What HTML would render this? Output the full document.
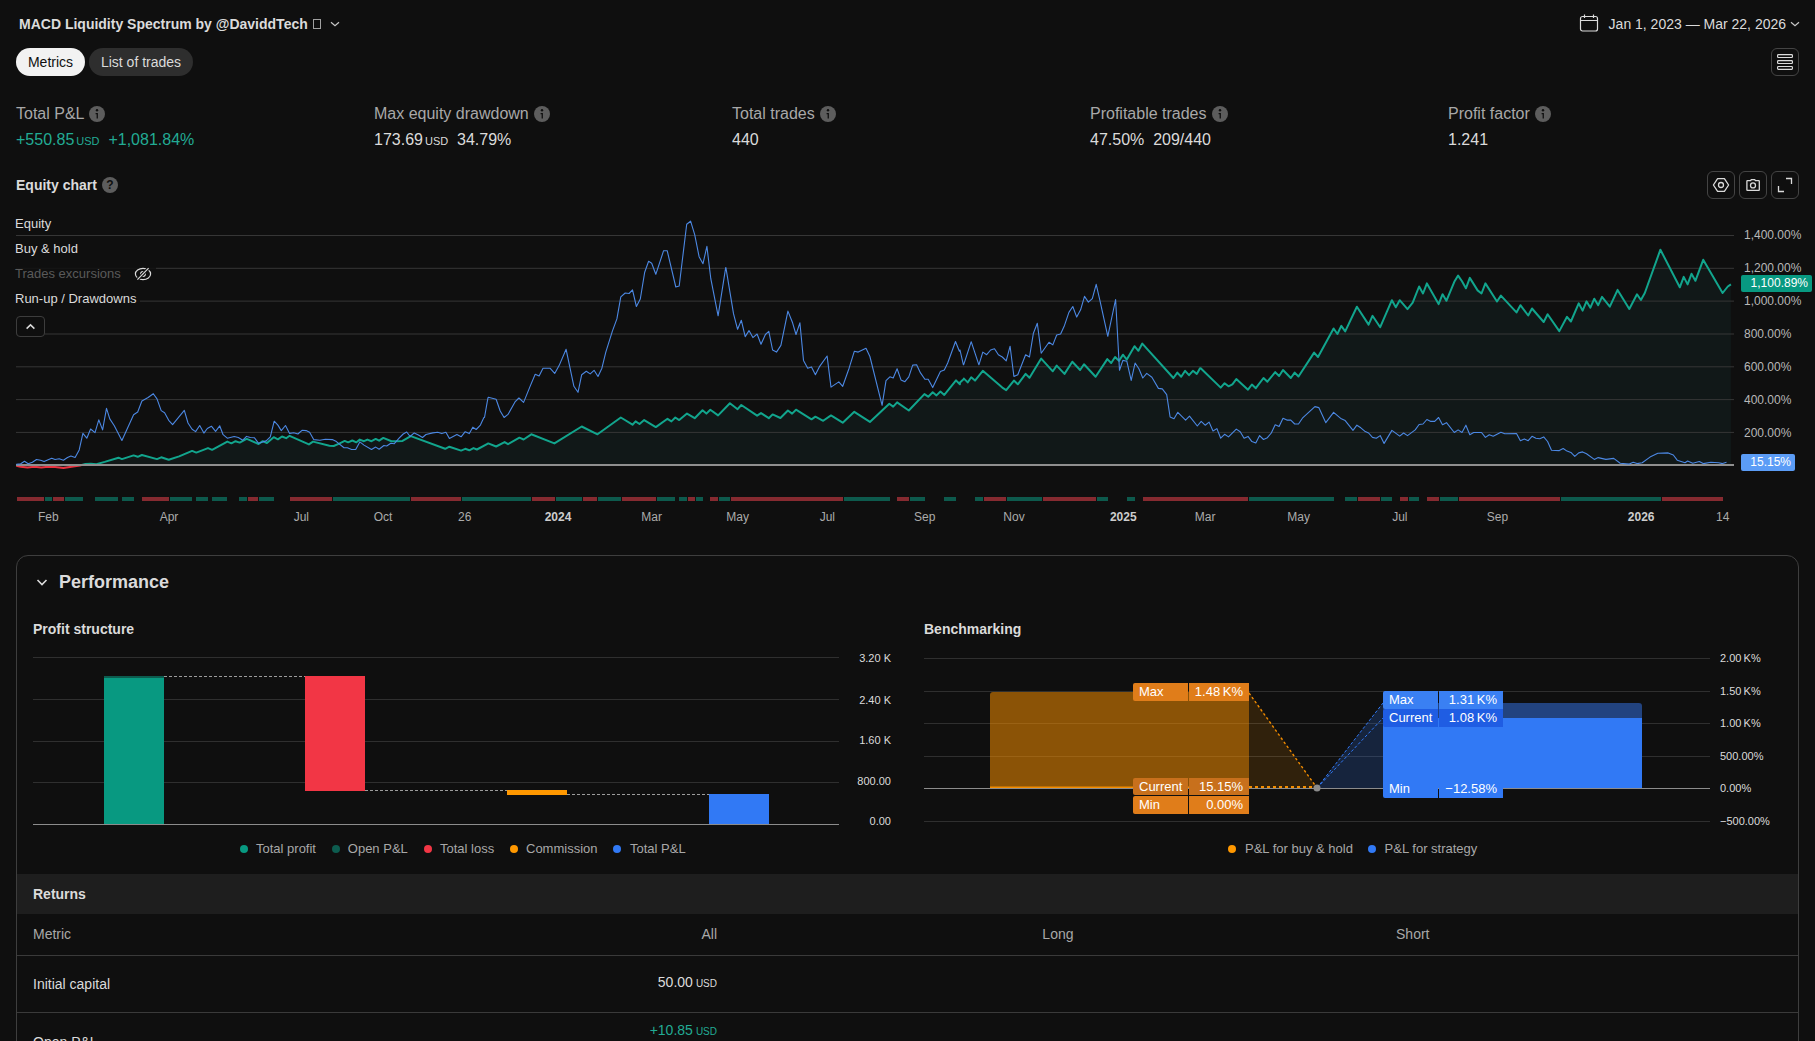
<!DOCTYPE html>
<html><head><meta charset="utf-8">
<style>
*{box-sizing:border-box;margin:0;padding:0}
html,body{width:1815px;height:1041px;overflow:hidden;background:#0f0f0f;font-family:"Liberation Sans",sans-serif;color:#dbdbdb}
.a{position:absolute;white-space:nowrap}
.title{left:19px;top:16px;font-size:14px;font-weight:bold;color:#dbdbdb;line-height:17px}
.pill{top:48px;height:28px;border-radius:14px;font-size:14px;line-height:28px;text-align:center}
.mlabel{top:104px;font-size:16px;color:#a8a8a8;line-height:19px}
.mval{top:130px;font-size:16px;color:#dbdbdb;line-height:19px}
.usd{font-size:11px;margin-left:2px}
.info{display:inline-block;width:16px;height:16px;border-radius:50%;background:#5d5d5d;vertical-align:-3px;margin-left:5px;position:relative}
.btn{width:28px;height:28px;border:1px solid #444;border-radius:6px}
.yl{font-size:12px;color:#b8b8b8;line-height:14px}
.xl{font-size:12px;color:#ababab;line-height:14px;top:510px}
.leg{font-size:13px;color:#dbdbdb;line-height:16px;left:15px;margin-top:1px;background:rgba(15,15,15,0.85);padding-right:4px}
.perf{left:16px;top:555px;width:1783px;height:520px;border:1px solid #3e3e3e;border-radius:12px}
.gl{height:1px;background:#2e2e2e}
.ax{font-size:11px;color:#dbdbdb;line-height:13px}
.lg{font-size:13px;color:#a8a8a8;line-height:16px;top:841px}
.dot{display:inline-block;width:8px;height:8px;border-radius:50%;margin-right:7px;vertical-align:0px}
.tag{height:18px;font-size:13px;line-height:18px;color:#fff}
</style></head><body>
<!-- header -->
<div class="a title">MACD Liquidity Spectrum by @DaviddTech</div>
<div class="a" style="left:313px;top:19px;width:8px;height:10px;border:1px solid #a0a0a0"></div>
<svg class="a" style="left:329px;top:19px" width="12" height="9" viewBox="0 0 12 9"><path d="M2 3.2L6 6.8L10 3.2" fill="none" stroke="#c8c8c8" stroke-width="1.2"/></svg>

<svg class="a" style="left:1579px;top:13px" width="20" height="20" viewBox="0 0 20 20"><rect x="1.5" y="3.5" width="17" height="14.5" rx="2" fill="none" stroke="#dbdbdb" stroke-width="1.2"/><path d="M1.5 7.5H18.5M5.5 1.5V5M14.5 1.5V5" stroke="#dbdbdb" stroke-width="1.2"/></svg>
<div class="a" style="left:1608.6px;top:16px;font-size:14px;line-height:17px;color:#dbdbdb">Jan 1, 2023 — Mar 22, 2026</div>
<svg class="a" style="left:1789px;top:19px" width="12" height="9" viewBox="0 0 12 9"><path d="M2 3.2L6 6.8L10 3.2" fill="none" stroke="#c8c8c8" stroke-width="1.2"/></svg>

<div class="a pill" style="left:16px;width:69px;background:#f2f2f2;color:#0f0f0f">Metrics</div>
<div class="a pill" style="left:89px;width:104px;background:#2e2e2e;color:#dbdbdb">List of trades</div>
<div class="a btn" style="left:1771px;top:48px"><svg style="position:absolute;left:5px;top:5px" width="17" height="17" viewBox="0 0 17 17"><rect x="0.6" y="0.6" width="14.8" height="2.9" rx="0.8" fill="none" stroke="#dbdbdb" stroke-width="1.2"/><rect x="0.6" y="6.6" width="14.8" height="2.9" rx="0.8" fill="none" stroke="#dbdbdb" stroke-width="1.2"/><rect x="0.6" y="12.5" width="14.8" height="2.9" rx="0.8" fill="none" stroke="#dbdbdb" stroke-width="1.2"/></svg></div>

<!-- metrics -->
<div class="a mlabel" style="left:16px">Total P&amp;L<span class="info"><svg style="position:absolute;left:0;top:0" width="16" height="16" viewBox="0 0 16 16"><circle cx="8" cy="4.3" r="1.2" fill="#0f0f0f"/><path d="M6.6 7H8.9V12.5H7.6V8.2H6.6Z" fill="#0f0f0f"/></svg></span></div>
<div class="a mval" style="left:16px"><span style="color:#22ab94">+550.85<span class="usd">USD</span>&nbsp;&nbsp;+1,081.84%</span></div>
<div class="a mlabel" style="left:374px">Max equity drawdown<span class="info"><svg style="position:absolute;left:0;top:0" width="16" height="16" viewBox="0 0 16 16"><circle cx="8" cy="4.3" r="1.2" fill="#0f0f0f"/><path d="M6.6 7H8.9V12.5H7.6V8.2H6.6Z" fill="#0f0f0f"/></svg></span></div>
<div class="a mval" style="left:374px">173.69<span class="usd">USD</span>&nbsp;&nbsp;34.79%</div>
<div class="a mlabel" style="left:732px">Total trades<span class="info"><svg style="position:absolute;left:0;top:0" width="16" height="16" viewBox="0 0 16 16"><circle cx="8" cy="4.3" r="1.2" fill="#0f0f0f"/><path d="M6.6 7H8.9V12.5H7.6V8.2H6.6Z" fill="#0f0f0f"/></svg></span></div>
<div class="a mval" style="left:732px">440</div>
<div class="a mlabel" style="left:1090px">Profitable trades<span class="info"><svg style="position:absolute;left:0;top:0" width="16" height="16" viewBox="0 0 16 16"><circle cx="8" cy="4.3" r="1.2" fill="#0f0f0f"/><path d="M6.6 7H8.9V12.5H7.6V8.2H6.6Z" fill="#0f0f0f"/></svg></span></div>
<div class="a mval" style="left:1090px">47.50%&nbsp;&nbsp;209/440</div>
<div class="a mlabel" style="left:1448px">Profit factor<span class="info"><svg style="position:absolute;left:0;top:0" width="16" height="16" viewBox="0 0 16 16"><circle cx="8" cy="4.3" r="1.2" fill="#0f0f0f"/><path d="M6.6 7H8.9V12.5H7.6V8.2H6.6Z" fill="#0f0f0f"/></svg></span></div>
<div class="a mval" style="left:1448px">1.241</div>


<!-- equity chart header -->
<div class="a" style="left:16px;top:177px;font-size:14px;font-weight:bold;line-height:17px;color:#dbdbdb">Equity chart</div>
<div class="a" style="left:102px;top:177px;width:16px;height:16px;border-radius:50%;background:#5d5d5d;color:#0f0f0f;font-size:12px;font-weight:bold;line-height:17px;text-align:center">?</div>
<div class="a btn" style="left:1707px;top:171px"><svg style="position:absolute;left:-1px;top:-1px" width="28" height="28" viewBox="0 0 28 28"><path d="M6.4 14L10.6 7.6H17.4L21.6 14L17.4 20.4H10.6Z" fill="none" stroke="#dbdbdb" stroke-width="1.3" stroke-linejoin="round"/><circle cx="14" cy="14" r="2.5" fill="none" stroke="#dbdbdb" stroke-width="1.3"/></svg></div>
<div class="a btn" style="left:1739px;top:171px"><svg style="position:absolute;left:-1px;top:-1px" width="28" height="28" viewBox="0 0 28 28"><path d="M7.9 10.2Q7.9 9.7 8.4 9.7H11.6L12.3 8.6H15.7L16.4 9.7H19.8Q20.3 9.7 20.3 10.2V18.9Q20.3 19.4 19.8 19.4H8.4Q7.9 19.4 7.9 18.9Z" fill="none" stroke="#dbdbdb" stroke-width="1.3" stroke-linejoin="round"/><circle cx="14" cy="14.4" r="2.5" fill="none" stroke="#dbdbdb" stroke-width="1.3"/></svg></div>
<div class="a btn" style="left:1771px;top:171px"><svg style="position:absolute;left:-1px;top:-1px" width="28" height="28" viewBox="0 0 28 28"><path d="M15 7.5H20.5V13M7.5 15V20.5H13" fill="none" stroke="#dbdbdb" stroke-width="1.3"/></svg></div>

<!-- chart -->
<svg class="a" style="left:0;top:200px" width="1815" height="340" viewBox="0 200 1815 340">
<defs>
<clipPath id="above"><rect x="0" y="200" width="1815" height="265"/></clipPath>
<clipPath id="below"><rect x="0" y="465" width="1815" height="40"/></clipPath>
</defs>
<polygon points="16,465 16.3,465.7 20.7,466.8 27.5,467.4 34.4,466.8 41.3,467.5 48.2,466.8 55.1,467.1 63.4,467.9 71.6,466.8 79.9,465.5 85.4,463.9 90.9,463.7 96.4,464.2 104.7,461.9 118.5,457.7 121.9,459.1 133.6,455.4 137.7,456.8 141.9,455.0 157.0,459.1 161.2,457.3 168.7,459.8 179.1,456.4 192.1,450.9 196.3,452.6 208.0,448.1 212.1,449.8 227.3,441.6 231.4,443.3 235.5,441.2 239.7,442.6 246.6,438.9 246.9,438.9 258.6,444.0 262.7,441.2 266.9,443.0 273.7,437.2 277.9,439.3 282.0,436.5 286.1,438.2 289.6,435.8 308.9,444.4 313.0,441.6 329.5,445.8 333.7,446.0 339.2,443.7 344.7,440.9 348.1,442.3 352.3,440.5 356.4,442.3 359.8,439.6 364.0,441.2 367.4,439.6 371.5,441.2 375.7,438.9 379.1,440.7 383.3,437.9 391.5,441.2 395.6,441.2 402.5,440.9 410.8,436.1 445.2,448.8 449.4,446.7 461.1,450.6 465.2,448.8 469.3,450.3 473.5,448.1 476.9,449.5 487.9,443.7 488.3,443.4 496.1,446.5 504.6,442.1 508.0,444.2 519.4,437.7 523.6,439.5 531.3,434.3 554.4,443.4 581.7,426.5 597.5,434.3 620.8,417.5 632.5,424.7 635.6,421.4 639.5,424.0 644.2,420.1 655.8,427.1 667.5,418.8 671.4,421.4 675.3,417.5 679.2,420.1 687.0,413.6 694.7,418.2 702.5,410.2 706.4,413.6 710.3,409.7 718.1,415.4 729.9,403.2 737.6,409.2 741.3,405.0 757.1,415.7 761.0,413.1 768.8,418.2 772.6,414.4 780.4,418.0 787.9,410.5 792.1,413.6 796.0,409.7 811.5,419.3 815.4,416.7 823.2,420.8 831.0,415.4 842.7,422.7 854.3,411.8 869.9,421.9 889.3,403.7 893.2,406.6 897.1,402.4 908.8,410.5 924.4,394.1 928.2,396.7 932.7,392.3 936.5,395.4 940.4,391.5 944.3,394.9 956.0,380.4 959.9,384.3 960.0,382.5 963.8,379.1 963.9,378.6 967.3,381.9 967.7,382.5 971.2,377.3 975.0,380.6 982.8,370.8 1002.3,387.6 1006.2,390.2 1013.9,380.6 1017.8,384.3 1025.6,373.9 1029.5,377.8 1041.2,358.6 1052.8,371.3 1056.7,365.6 1064.5,373.9 1072.3,361.7 1080.1,370.0 1084.0,364.3 1095.6,376.8 1107.3,359.1 1111.2,363.0 1115.1,357.0 1119.0,360.9 1122.9,354.7 1126.8,359.6 1134.5,346.2 1138.4,350.8 1142.3,343.6 1173.4,378.0 1177.3,372.6 1181.2,376.8 1185.1,370.8 1189.0,375.2 1192.9,370.8 1196.8,373.9 1200.0,368.2 1200.7,368.2 1220.7,387.6 1224.6,383.2 1228.5,386.3 1232.4,384.3 1236.3,379.1 1248.0,389.7 1251.9,384.5 1255.8,388.2 1263.5,378.0 1267.4,381.7 1275.2,372.1 1279.1,376.0 1283.0,370.0 1290.8,378.0 1294.7,372.6 1298.5,376.5 1314.1,352.6 1318.0,357.0 1333.6,328.5 1337.4,334.0 1341.3,325.9 1345.2,331.4 1356.9,306.7 1368.6,324.6 1372.5,315.8 1380.2,327.2 1391.9,300.2 1395.8,307.3 1399.7,300.2 1407.5,309.1 1412.7,302.6 1419.1,286.5 1423.0,293.5 1426.9,283.4 1438.6,304.1 1442.5,294.3 1442.6,294.3 1446.4,300.8 1446.5,300.7 1454.3,281.8 1458.1,275.6 1462.0,281.3 1465.9,288.3 1469.8,277.9 1477.6,290.4 1481.5,293.5 1485.4,283.4 1497.0,301.5 1500.9,295.6 1516.5,312.4 1520.4,305.2 1528.2,315.5 1532.0,308.5 1543.7,322.0 1547.6,314.2 1559.3,331.1 1567.0,316.8 1570.9,321.5 1578.7,303.3 1582.6,310.6 1586.5,301.3 1590.4,307.7 1594.3,298.7 1598.2,305.2 1602.0,296.9 1609.8,306.7 1617.6,289.9 1629.3,309.0 1637.0,294.3 1640.9,300.0 1644.8,293.0 1660.4,249.7 1679.8,287.3 1683.7,276.9 1687.6,284.4 1691.5,273.8 1695.4,280.8 1703.2,259.8 1722.6,293.0 1727.8,286.5 1730.9,284.4 1731,465" fill="#111818"/>
<line x1="16" y1="432.4" x2="1734" y2="432.4" stroke="#363636" stroke-width="1"/>
<line x1="16" y1="399.6" x2="1734" y2="399.6" stroke="#363636" stroke-width="1"/>
<line x1="16" y1="366.8" x2="1734" y2="366.8" stroke="#363636" stroke-width="1"/>
<line x1="16" y1="334.0" x2="1734" y2="334.0" stroke="#363636" stroke-width="1"/>
<line x1="16" y1="301.1" x2="1734" y2="301.1" stroke="#363636" stroke-width="1"/>
<line x1="16" y1="268.3" x2="1734" y2="268.3" stroke="#363636" stroke-width="1"/>
<line x1="16" y1="235.5" x2="1734" y2="235.5" stroke="#363636" stroke-width="1"/>

<polyline clip-path="url(#above)" points="16.3,465.7 20.7,466.8 27.5,467.4 34.4,466.8 41.3,467.5 48.2,466.8 55.1,467.1 63.4,467.9 71.6,466.8 79.9,465.5 85.4,463.9 90.9,463.7 96.4,464.2 104.7,461.9 118.5,457.7 121.9,459.1 133.6,455.4 137.7,456.8 141.9,455.0 157.0,459.1 161.2,457.3 168.7,459.8 179.1,456.4 192.1,450.9 196.3,452.6 208.0,448.1 212.1,449.8 227.3,441.6 231.4,443.3 235.5,441.2 239.7,442.6 246.6,438.9 246.9,438.9 258.6,444.0 262.7,441.2 266.9,443.0 273.7,437.2 277.9,439.3 282.0,436.5 286.1,438.2 289.6,435.8 308.9,444.4 313.0,441.6 329.5,445.8 333.7,446.0 339.2,443.7 344.7,440.9 348.1,442.3 352.3,440.5 356.4,442.3 359.8,439.6 364.0,441.2 367.4,439.6 371.5,441.2 375.7,438.9 379.1,440.7 383.3,437.9 391.5,441.2 395.6,441.2 402.5,440.9 410.8,436.1 445.2,448.8 449.4,446.7 461.1,450.6 465.2,448.8 469.3,450.3 473.5,448.1 476.9,449.5 487.9,443.7 488.3,443.4 496.1,446.5 504.6,442.1 508.0,444.2 519.4,437.7 523.6,439.5 531.3,434.3 554.4,443.4 581.7,426.5 597.5,434.3 620.8,417.5 632.5,424.7 635.6,421.4 639.5,424.0 644.2,420.1 655.8,427.1 667.5,418.8 671.4,421.4 675.3,417.5 679.2,420.1 687.0,413.6 694.7,418.2 702.5,410.2 706.4,413.6 710.3,409.7 718.1,415.4 729.9,403.2 737.6,409.2 741.3,405.0 757.1,415.7 761.0,413.1 768.8,418.2 772.6,414.4 780.4,418.0 787.9,410.5 792.1,413.6 796.0,409.7 811.5,419.3 815.4,416.7 823.2,420.8 831.0,415.4 842.7,422.7 854.3,411.8 869.9,421.9 889.3,403.7 893.2,406.6 897.1,402.4 908.8,410.5 924.4,394.1 928.2,396.7 932.7,392.3 936.5,395.4 940.4,391.5 944.3,394.9 956.0,380.4 959.9,384.3 960.0,382.5 963.8,379.1 963.9,378.6 967.3,381.9 967.7,382.5 971.2,377.3 975.0,380.6 982.8,370.8 1002.3,387.6 1006.2,390.2 1013.9,380.6 1017.8,384.3 1025.6,373.9 1029.5,377.8 1041.2,358.6 1052.8,371.3 1056.7,365.6 1064.5,373.9 1072.3,361.7 1080.1,370.0 1084.0,364.3 1095.6,376.8 1107.3,359.1 1111.2,363.0 1115.1,357.0 1119.0,360.9 1122.9,354.7 1126.8,359.6 1134.5,346.2 1138.4,350.8 1142.3,343.6 1173.4,378.0 1177.3,372.6 1181.2,376.8 1185.1,370.8 1189.0,375.2 1192.9,370.8 1196.8,373.9 1200.0,368.2 1200.7,368.2 1220.7,387.6 1224.6,383.2 1228.5,386.3 1232.4,384.3 1236.3,379.1 1248.0,389.7 1251.9,384.5 1255.8,388.2 1263.5,378.0 1267.4,381.7 1275.2,372.1 1279.1,376.0 1283.0,370.0 1290.8,378.0 1294.7,372.6 1298.5,376.5 1314.1,352.6 1318.0,357.0 1333.6,328.5 1337.4,334.0 1341.3,325.9 1345.2,331.4 1356.9,306.7 1368.6,324.6 1372.5,315.8 1380.2,327.2 1391.9,300.2 1395.8,307.3 1399.7,300.2 1407.5,309.1 1412.7,302.6 1419.1,286.5 1423.0,293.5 1426.9,283.4 1438.6,304.1 1442.5,294.3 1442.6,294.3 1446.4,300.8 1446.5,300.7 1454.3,281.8 1458.1,275.6 1462.0,281.3 1465.9,288.3 1469.8,277.9 1477.6,290.4 1481.5,293.5 1485.4,283.4 1497.0,301.5 1500.9,295.6 1516.5,312.4 1520.4,305.2 1528.2,315.5 1532.0,308.5 1543.7,322.0 1547.6,314.2 1559.3,331.1 1567.0,316.8 1570.9,321.5 1578.7,303.3 1582.6,310.6 1586.5,301.3 1590.4,307.7 1594.3,298.7 1598.2,305.2 1602.0,296.9 1609.8,306.7 1617.6,289.9 1629.3,309.0 1637.0,294.3 1640.9,300.0 1644.8,293.0 1660.4,249.7 1679.8,287.3 1683.7,276.9 1687.6,284.4 1691.5,273.8 1695.4,280.8 1703.2,259.8 1722.6,293.0 1727.8,286.5 1730.9,284.4" fill="none" stroke="#12a58d" stroke-width="2" stroke-linejoin="round"/>
<polyline clip-path="url(#below)" points="16.3,465.7 20.7,466.8 27.5,467.4 34.4,466.8 41.3,467.5 48.2,466.8 55.1,467.1 63.4,467.9 71.6,466.8 79.9,465.5 85.4,463.9 90.9,463.7 96.4,464.2 104.7,461.9 118.5,457.7 121.9,459.1 133.6,455.4 137.7,456.8 141.9,455.0 157.0,459.1 161.2,457.3 168.7,459.8 179.1,456.4 192.1,450.9 196.3,452.6 208.0,448.1 212.1,449.8 227.3,441.6 231.4,443.3 235.5,441.2 239.7,442.6 246.6,438.9 246.9,438.9 258.6,444.0 262.7,441.2 266.9,443.0 273.7,437.2 277.9,439.3 282.0,436.5 286.1,438.2 289.6,435.8 308.9,444.4 313.0,441.6 329.5,445.8 333.7,446.0 339.2,443.7 344.7,440.9 348.1,442.3 352.3,440.5 356.4,442.3 359.8,439.6 364.0,441.2 367.4,439.6 371.5,441.2 375.7,438.9 379.1,440.7 383.3,437.9 391.5,441.2 395.6,441.2 402.5,440.9 410.8,436.1 445.2,448.8 449.4,446.7 461.1,450.6 465.2,448.8 469.3,450.3 473.5,448.1 476.9,449.5 487.9,443.7 488.3,443.4 496.1,446.5 504.6,442.1 508.0,444.2 519.4,437.7 523.6,439.5 531.3,434.3 554.4,443.4 581.7,426.5 597.5,434.3 620.8,417.5 632.5,424.7 635.6,421.4 639.5,424.0 644.2,420.1 655.8,427.1 667.5,418.8 671.4,421.4 675.3,417.5 679.2,420.1 687.0,413.6 694.7,418.2 702.5,410.2 706.4,413.6 710.3,409.7 718.1,415.4 729.9,403.2 737.6,409.2 741.3,405.0 757.1,415.7 761.0,413.1 768.8,418.2 772.6,414.4 780.4,418.0 787.9,410.5 792.1,413.6 796.0,409.7 811.5,419.3 815.4,416.7 823.2,420.8 831.0,415.4 842.7,422.7 854.3,411.8 869.9,421.9 889.3,403.7 893.2,406.6 897.1,402.4 908.8,410.5 924.4,394.1 928.2,396.7 932.7,392.3 936.5,395.4 940.4,391.5 944.3,394.9 956.0,380.4 959.9,384.3 960.0,382.5 963.8,379.1 963.9,378.6 967.3,381.9 967.7,382.5 971.2,377.3 975.0,380.6 982.8,370.8 1002.3,387.6 1006.2,390.2 1013.9,380.6 1017.8,384.3 1025.6,373.9 1029.5,377.8 1041.2,358.6 1052.8,371.3 1056.7,365.6 1064.5,373.9 1072.3,361.7 1080.1,370.0 1084.0,364.3 1095.6,376.8 1107.3,359.1 1111.2,363.0 1115.1,357.0 1119.0,360.9 1122.9,354.7 1126.8,359.6 1134.5,346.2 1138.4,350.8 1142.3,343.6 1173.4,378.0 1177.3,372.6 1181.2,376.8 1185.1,370.8 1189.0,375.2 1192.9,370.8 1196.8,373.9 1200.0,368.2 1200.7,368.2 1220.7,387.6 1224.6,383.2 1228.5,386.3 1232.4,384.3 1236.3,379.1 1248.0,389.7 1251.9,384.5 1255.8,388.2 1263.5,378.0 1267.4,381.7 1275.2,372.1 1279.1,376.0 1283.0,370.0 1290.8,378.0 1294.7,372.6 1298.5,376.5 1314.1,352.6 1318.0,357.0 1333.6,328.5 1337.4,334.0 1341.3,325.9 1345.2,331.4 1356.9,306.7 1368.6,324.6 1372.5,315.8 1380.2,327.2 1391.9,300.2 1395.8,307.3 1399.7,300.2 1407.5,309.1 1412.7,302.6 1419.1,286.5 1423.0,293.5 1426.9,283.4 1438.6,304.1 1442.5,294.3 1442.6,294.3 1446.4,300.8 1446.5,300.7 1454.3,281.8 1458.1,275.6 1462.0,281.3 1465.9,288.3 1469.8,277.9 1477.6,290.4 1481.5,293.5 1485.4,283.4 1497.0,301.5 1500.9,295.6 1516.5,312.4 1520.4,305.2 1528.2,315.5 1532.0,308.5 1543.7,322.0 1547.6,314.2 1559.3,331.1 1567.0,316.8 1570.9,321.5 1578.7,303.3 1582.6,310.6 1586.5,301.3 1590.4,307.7 1594.3,298.7 1598.2,305.2 1602.0,296.9 1609.8,306.7 1617.6,289.9 1629.3,309.0 1637.0,294.3 1640.9,300.0 1644.8,293.0 1660.4,249.7 1679.8,287.3 1683.7,276.9 1687.6,284.4 1691.5,273.8 1695.4,280.8 1703.2,259.8 1722.6,293.0 1727.8,286.5 1730.9,284.4" fill="none" stroke="#e8323f" stroke-width="2" stroke-linejoin="round"/>
<line x1="16" y1="465" x2="1734" y2="465" stroke="#8f8f8f" stroke-width="2"/>
<polyline points="16.3,464.4 20.7,463.7 24.5,461.2 28.2,463.7 32.4,462.3 36.5,459.5 40.6,460.2 44.1,461.6 51.7,458.2 55.1,459.5 59.2,458.8 63.4,460.2 67.5,457.5 70.9,456.1 75.1,457.5 79.2,449.9 82.9,433.4 86.8,438.2 90.6,429.0 95.0,432.7 98.8,419.9 102.6,429.9 106.5,408.3 109.8,418.9 114.3,425.8 121.9,440.5 133.6,414.8 137.7,412.0 141.9,401.0 148.1,397.5 153.3,393.7 157.0,398.9 161.2,410.6 164.6,412.7 168.7,420.3 172.6,424.7 184.3,410.4 188.0,423.0 192.1,429.2 195.6,431.6 199.7,425.5 203.9,433.1 207.3,428.5 211.4,426.2 215.6,431.3 219.7,425.8 223.1,434.7 227.3,438.2 234.2,436.5 238.3,437.5 242.4,440.0 242.8,440.2 246.6,436.4 246.9,436.5 250.3,437.5 254.5,437.8 258.6,443.3 262.7,441.9 266.2,440.9 270.3,436.8 274.2,421.2 277.9,425.1 281.3,430.6 285.5,425.5 289.6,433.4 293.7,432.7 297.9,434.0 302.0,430.3 306.1,430.6 309.6,432.3 313.7,439.6 319.9,440.2 325.4,439.3 332.3,439.6 336.4,441.6 344.0,447.8 347.4,447.8 351.6,449.5 355.7,449.5 359.8,441.9 364.0,445.1 371.5,449.5 375.7,447.1 379.1,449.2 383.9,445.5 386.7,446.0 390.8,443.3 394.3,443.7 399.1,438.2 403.2,434.0 406.7,432.0 410.1,436.5 414.2,432.9 418.4,435.0 422.5,437.5 426.0,434.5 432.8,432.9 437.7,432.3 441.8,433.6 445.9,432.3 449.4,438.5 456.9,434.5 461.1,436.8 465.2,431.7 469.3,433.6 472.8,427.2 476.2,429.5 480.4,425.1 483.9,417.5 484.5,417.5 487.9,398.2 488.3,397.2 496.1,399.3 500.2,411.0 504.1,417.5 508.0,414.4 515.0,401.9 518.9,398.0 523.6,402.4 530.6,385.1 535.2,374.2 539.1,376.0 543.0,368.2 550.0,368.2 554.7,373.4 559.1,365.6 566.1,349.3 573.9,386.3 578.0,392.3 581.7,374.7 586.3,371.3 590.2,373.9 594.1,370.3 598.0,376.5 601.9,368.2 605.8,352.1 612.3,331.4 616.9,318.9 620.8,296.9 625.2,293.0 629.1,293.5 632.5,289.9 636.4,306.5 640.3,299.0 644.7,272.2 648.6,261.3 651.7,263.2 655.8,274.3 663.6,250.7 667.2,250.7 675.8,287.0 679.2,286.0 686.7,224.3 690.6,221.2 694.7,234.6 699.1,256.7 703.0,263.7 706.9,246.3 710.8,278.7 718.1,315.8 725.7,267.6 725.9,267.6 733.5,313.7 737.6,329.3 741.3,320.2 745.2,336.6 749.0,330.6 752.9,337.6 757.1,334.0 761.0,344.3 765.4,334.5 768.8,331.4 772.6,350.0 776.5,352.1 780.9,345.4 787.9,311.1 792.6,322.8 796.0,334.5 799.9,322.8 803.5,360.4 807.7,368.2 811.5,366.9 815.4,374.7 819.3,366.9 827.1,356.0 831.0,387.1 838.8,381.9 842.7,386.3 849.1,368.2 854.3,351.3 858.2,352.1 866.0,348.2 869.9,356.5 882.1,405.3 886.0,380.6 889.9,376.8 893.2,378.0 897.1,368.7 901.0,379.9 904.9,381.7 908.8,376.8 912.7,365.1 916.6,364.8 920.5,372.9 924.9,379.3 928.2,379.3 932.7,387.6 940.4,371.6 944.3,370.0 947.7,363.0 955.5,341.5 959.4,351.3 960.0,350.0 963.4,364.8 963.8,364.3 971.2,341.7 978.9,364.8 982.8,352.1 986.7,354.7 990.6,350.0 994.5,348.7 998.4,354.7 1002.3,357.0 1006.2,360.9 1010.1,346.2 1013.9,376.5 1017.8,374.7 1025.6,354.7 1029.5,357.0 1033.4,333.2 1037.3,323.3 1041.2,353.2 1049.0,342.3 1052.8,344.9 1056.7,335.0 1060.6,334.0 1064.5,325.4 1068.9,312.4 1072.8,306.5 1076.7,317.1 1080.6,309.8 1084.5,296.4 1088.4,302.1 1092.3,298.7 1096.2,284.4 1100.0,300.8 1107.8,336.3 1115.6,299.5 1119.5,370.3 1122.9,360.4 1126.8,361.2 1131.2,380.4 1135.1,363.0 1138.9,368.7 1142.8,378.0 1146.7,373.4 1151.9,377.3 1158.4,388.4 1162.3,388.9 1166.7,394.6 1170.1,417.0 1174.0,418.8 1177.8,412.3 1185.6,420.1 1189.5,416.2 1197.3,426.0 1201.2,421.4 1205.1,425.2 1205.2,425.2 1209.1,422.1 1213.0,431.0 1216.9,428.6 1220.7,438.2 1224.6,434.3 1228.5,436.9 1236.3,429.1 1240.2,431.7 1244.1,438.2 1248.0,436.4 1251.9,441.6 1255.8,442.9 1259.6,435.6 1263.5,439.5 1267.4,437.7 1271.3,433.0 1275.2,424.7 1279.1,426.5 1283.0,418.2 1286.9,420.1 1290.8,420.1 1294.7,424.0 1298.5,424.0 1302.4,418.2 1314.9,406.6 1318.8,407.6 1325.8,422.7 1333.6,412.3 1341.3,418.8 1345.2,420.6 1353.0,430.4 1356.9,425.2 1360.8,427.8 1364.7,431.2 1368.6,433.0 1372.5,437.4 1376.3,438.2 1380.2,435.6 1384.1,443.4 1391.9,430.4 1399.7,436.1 1403.6,433.0 1407.5,435.6 1415.2,429.9 1419.1,424.5 1423.0,424.0 1426.9,419.5 1430.8,421.4 1434.7,421.4 1438.6,417.5 1442.5,424.7 1442.6,424.7 1446.4,422.7 1446.5,422.6 1454.3,432.5 1458.1,429.9 1462.0,432.5 1465.9,425.2 1469.8,434.8 1473.7,432.5 1481.5,432.5 1485.4,437.4 1489.3,434.8 1493.2,436.3 1500.9,432.2 1504.8,433.7 1516.5,433.5 1520.4,440.7 1524.3,438.9 1528.2,440.7 1532.0,436.3 1535.9,438.2 1539.8,438.7 1543.7,436.9 1547.6,441.5 1551.5,450.3 1559.3,450.6 1563.2,448.5 1567.0,451.1 1570.9,452.4 1574.8,456.3 1578.7,452.9 1582.6,451.9 1586.5,453.7 1594.3,459.4 1598.2,457.6 1605.9,459.4 1613.7,458.4 1620.2,463.3 1629.3,464.1 1633.2,462.3 1637.0,463.6 1642.2,462.8 1650.0,457.1 1657.8,453.2 1668.2,452.9 1673.3,455.0 1677.2,460.2 1685.0,462.8 1687.6,461.0 1692.8,463.3 1699.3,461.5 1703.2,463.6 1710.9,462.3 1718.7,462.8 1722.6,463.6 1726.5,462.3" fill="none" stroke="#4c88e3" stroke-width="1.1" stroke-linejoin="round"/>
<rect x="17" y="497" width="27" height="4" fill="#862a30"/><rect x="45" y="497" width="7" height="4" fill="#0d5a4d"/><rect x="53" y="497" width="11" height="4" fill="#862a30"/><rect x="65" y="497" width="18" height="4" fill="#0d5a4d"/><rect x="95" y="497" width="23" height="4" fill="#0d5a4d"/><rect x="122" y="497" width="12" height="4" fill="#0d5a4d"/><rect x="142" y="497" width="27" height="4" fill="#862a30"/><rect x="170" y="497" width="22" height="4" fill="#0d5a4d"/><rect x="196" y="497" width="12" height="4" fill="#0d5a4d"/><rect x="212" y="497" width="15" height="4" fill="#0d5a4d"/><rect x="239" y="497" width="8" height="4" fill="#0d5a4d"/><rect x="248" y="497" width="10" height="4" fill="#862a30"/><rect x="259" y="497" width="15" height="4" fill="#0d5a4d"/><rect x="290" y="497" width="42" height="4" fill="#862a30"/><rect x="333" y="497" width="77" height="4" fill="#0d5a4d"/><rect x="411" y="497" width="50" height="4" fill="#862a30"/><rect x="462" y="497" width="69" height="4" fill="#0d5a4d"/><rect x="532" y="497" width="23" height="4" fill="#862a30"/><rect x="556" y="497" width="26" height="4" fill="#0d5a4d"/><rect x="583" y="497" width="14" height="4" fill="#862a30"/><rect x="598" y="497" width="23" height="4" fill="#0d5a4d"/><rect x="622" y="497" width="34" height="4" fill="#862a30"/><rect x="657" y="497" width="18" height="4" fill="#0d5a4d"/><rect x="679" y="497" width="8" height="4" fill="#0d5a4d"/><rect x="688" y="497" width="7" height="4" fill="#862a30"/><rect x="696" y="497" width="7" height="4" fill="#0d5a4d"/><rect x="710" y="497" width="8" height="4" fill="#862a30"/><rect x="719" y="497" width="11" height="4" fill="#0d5a4d"/><rect x="731" y="497" width="112" height="4" fill="#862a30"/><rect x="844" y="497" width="46" height="4" fill="#0d5a4d"/><rect x="897" y="497" width="12" height="4" fill="#862a30"/><rect x="910" y="497" width="15" height="4" fill="#0d5a4d"/><rect x="944" y="497" width="12" height="4" fill="#0d5a4d"/><rect x="975" y="497" width="8" height="4" fill="#0d5a4d"/><rect x="984" y="497" width="22" height="4" fill="#862a30"/><rect x="1007" y="497" width="35" height="4" fill="#0d5a4d"/><rect x="1043" y="497" width="53" height="4" fill="#862a30"/><rect x="1097" y="497" width="11" height="4" fill="#0d5a4d"/><rect x="1127" y="497" width="8" height="4" fill="#0d5a4d"/><rect x="1143" y="497" width="105" height="4" fill="#862a30"/><rect x="1249" y="497" width="85" height="4" fill="#0d5a4d"/><rect x="1345" y="497" width="12" height="4" fill="#0d5a4d"/><rect x="1358" y="497" width="22" height="4" fill="#862a30"/><rect x="1381" y="497" width="11" height="4" fill="#0d5a4d"/><rect x="1400" y="497" width="8" height="4" fill="#862a30"/><rect x="1409" y="497" width="10" height="4" fill="#0d5a4d"/><rect x="1427" y="497" width="12" height="4" fill="#862a30"/><rect x="1440" y="497" width="18" height="4" fill="#0d5a4d"/><rect x="1459" y="497" width="101" height="4" fill="#862a30"/><rect x="1561" y="497" width="100" height="4" fill="#0d5a4d"/><rect x="1662" y="497" width="61" height="4" fill="#862a30"/>
</svg>
<div class="a yl" style="left:1744px;top:425.8px">200.00%</div>
<div class="a yl" style="left:1744px;top:392.9px">400.00%</div>
<div class="a yl" style="left:1744px;top:360.0px">600.00%</div>
<div class="a yl" style="left:1744px;top:327.1px">800.00%</div>
<div class="a yl" style="left:1744px;top:294.2px">1,000.00%</div>
<div class="a yl" style="left:1744px;top:261.3px">1,200.00%</div>
<div class="a yl" style="left:1744px;top:228.4px">1,400.00%</div>

<div class="a xl" style="left:8.3px;width:80px;text-align:center;">Feb</div>
<div class="a xl" style="left:129.0px;width:80px;text-align:center;">Apr</div>
<div class="a xl" style="left:261.3px;width:80px;text-align:center;">Jul</div>
<div class="a xl" style="left:343.0px;width:80px;text-align:center;">Oct</div>
<div class="a xl" style="left:424.8px;width:80px;text-align:center;">26</div>
<div class="a xl" style="left:518.0px;width:80px;text-align:center;font-weight:bold;color:#cdcdcd;">2024</div>
<div class="a xl" style="left:611.7px;width:80px;text-align:center;">Mar</div>
<div class="a xl" style="left:697.7px;width:80px;text-align:center;">May</div>
<div class="a xl" style="left:787.3px;width:80px;text-align:center;">Jul</div>
<div class="a xl" style="left:884.8px;width:80px;text-align:center;">Sep</div>
<div class="a xl" style="left:974.0px;width:80px;text-align:center;">Nov</div>
<div class="a xl" style="left:1083.3px;width:80px;text-align:center;font-weight:bold;color:#cdcdcd;">2025</div>
<div class="a xl" style="left:1165.2px;width:80px;text-align:center;">Mar</div>
<div class="a xl" style="left:1258.7px;width:80px;text-align:center;">May</div>
<div class="a xl" style="left:1359.8px;width:80px;text-align:center;">Jul</div>
<div class="a xl" style="left:1457.4px;width:80px;text-align:center;">Sep</div>
<div class="a xl" style="left:1601.2px;width:80px;text-align:center;font-weight:bold;color:#cdcdcd;">2026</div>
<div class="a xl" style="left:1682.8px;width:80px;text-align:center;">14</div>

<div class="a" style="left:1741px;top:275px;width:71px;height:17px;background:#089981;border-radius:2px;color:#fff;font-size:12px;line-height:17px;text-align:right;padding-right:4px">1,100.89%</div>
<div class="a" style="left:1741px;top:454px;width:54px;height:17px;background:#5b9cf6;border-radius:2px;color:#fff;font-size:12px;line-height:17px;text-align:right;padding-right:4px">15.15%</div>

<div class="a leg" style="top:215px">Equity</div>
<div class="a leg" style="top:240px">Buy &amp; hold</div>
<div class="a leg" style="top:265px;color:#5a5a5a;width:141px">Trades excursions</div>
<svg class="a" style="left:133px;top:265px" width="20" height="18" viewBox="0 0 20 18"><ellipse cx="10" cy="9" rx="7.6" ry="5.6" fill="none" stroke="#dbdbdb" stroke-width="1.2"/><circle cx="10" cy="9" r="2.3" fill="none" stroke="#dbdbdb" stroke-width="1.2"/><path d="M4.4 14.7L15.6 3.2" stroke="#0f0f0f" stroke-width="3.2"/><path d="M4.4 14.7L15.6 3.2" stroke="#dbdbdb" stroke-width="1.2"/></svg>
<div class="a leg" style="top:290px">Run-up / Drawdowns</div>
<div class="a" style="left:16px;top:316px;width:29px;height:21px;border:1px solid #3d3d3d;border-radius:4px;background:#0f0f0f"><svg style="position:absolute;left:8px;top:5px" width="12" height="9" viewBox="0 0 12 9"><path d="M1.6 6.6L5.5 2.9L9.4 6.6" fill="none" stroke="#dbdbdb" stroke-width="1.5"/></svg></div>

<!-- performance -->
<div class="a perf"></div>
<svg class="a" style="left:36px;top:577px" width="12" height="10" viewBox="0 0 12 10"><path d="M1.5 3L6 7.5L10.5 3" fill="none" stroke="#dbdbdb" stroke-width="1.6"/></svg>
<div class="a" style="left:59px;top:571.8px;font-size:18px;font-weight:bold;line-height:21px;color:#dbdbdb">Performance</div>
<div class="a" style="left:33px;top:620.7px;font-size:14px;font-weight:bold;line-height:17px;color:#dbdbdb">Profit structure</div>
<div class="a" style="left:924px;top:620.7px;font-size:14px;font-weight:bold;line-height:17px;color:#dbdbdb">Benchmarking</div>
<svg class="a" style="left:0;top:640px" width="1815" height="190" viewBox="0 640 1815 190"><line x1="33" y1="657.5" x2="839" y2="657.5" stroke="#2f2f2f"/><line x1="33" y1="699.5" x2="839" y2="699.5" stroke="#2f2f2f"/><line x1="33" y1="741.5" x2="839" y2="741.5" stroke="#2f2f2f"/><line x1="33" y1="782.5" x2="839" y2="782.5" stroke="#2f2f2f"/><rect x="104" y="676" width="60" height="148" fill="#089981"/><rect x="104" y="676" width="60" height="2" fill="#0d5c4f"/><rect x="305" y="676" width="60" height="115" fill="#f23645"/><rect x="507" y="790" width="60" height="5" fill="#ff9800"/><rect x="709" y="794" width="60" height="30" fill="#3179f5"/><line x1="33" y1="824.5" x2="839" y2="824.5" stroke="#8c8c8c"/><path d="M164 676.5H305M365 790.5H507M567 794.5H709" stroke="#9c9c9c" stroke-dasharray="3 2"/><line x1="924" y1="658.5" x2="1710" y2="658.5" stroke="#2f2f2f"/><line x1="924" y1="691.5" x2="1710" y2="691.5" stroke="#2f2f2f"/><line x1="924" y1="723.5" x2="1710" y2="723.5" stroke="#2f2f2f"/><line x1="924" y1="756.5" x2="1710" y2="756.5" stroke="#2f2f2f"/><line x1="924" y1="821.5" x2="1710" y2="821.5" stroke="#2f2f2f"/><path d="M990 788V695Q990 692 993 692H1249V788Z" fill="rgba(242,140,0,0.55)"/><rect x="990" y="786.5" width="259" height="2" fill="#f28c00"/><path d="M1249 692L1317 788H1249Z" fill="rgba(242,140,0,0.15)"/><path d="M1249 693L1317 788" stroke="#f28c00" stroke-width="1.4" stroke-dasharray="2.5 2.5" fill="none"/><path d="M1249 787H1317" stroke="#f28c00" stroke-width="2" stroke-dasharray="3 3" fill="none"/><path d="M1317 788L1383 703V788Z" fill="rgba(49,121,245,0.2)"/><path d="M1317 788L1383 703M1317 788L1383 718M1317 788.5H1383" stroke="#3179f5" stroke-dasharray="3 2" fill="none"/><line x1="924" y1="788.5" x2="1710" y2="788.5" stroke="#8c8c8c"/><path d="M1383 788V703H1639Q1642 703 1642 706V788Z" fill="#22437f"/><rect x="1383" y="718" width="259" height="70" fill="#3179f5"/><circle cx="1317" cy="788" r="3.5" fill="#8c8c8c"/></svg>
<div class="a ax" style="left:791px;width:100px;text-align:right;top:652.0px">3.20 K</div>
<div class="a ax" style="left:791px;width:100px;text-align:right;top:693.5px">2.40 K</div>
<div class="a ax" style="left:791px;width:100px;text-align:right;top:734.0px">1.60 K</div>
<div class="a ax" style="left:791px;width:100px;text-align:right;top:774.5px">800.00</div>
<div class="a ax" style="left:791px;width:100px;text-align:right;top:814.5px">0.00</div>
<div class="a ax" style="left:1720px;top:651.5px">2.00 K%</div>
<div class="a ax" style="left:1720px;top:684.5px">1.50 K%</div>
<div class="a ax" style="left:1720px;top:716.5px">1.00 K%</div>
<div class="a ax" style="left:1720px;top:749.5px">500.00%</div>
<div class="a ax" style="left:1720px;top:781.5px">0.00%</div>
<div class="a ax" style="left:1720px;top:814.5px">−500.00%</div>
<div class="a tag" style="left:1133px;top:683px;width:55px;height:18px;line-height:18px;background:#e07d1a;padding-left:6px;border-radius:2px 0 0 2px">Max</div><div class="a tag" style="left:1189px;top:683px;width:60px;height:18px;line-height:18px;background:#e07d1a;text-align:right;padding-right:6px;border-radius:0">1.48 K%</div>
<div class="a tag" style="left:1133px;top:778px;width:55px;height:17px;line-height:17px;background:#c8701c;padding-left:6px;border-radius:2px 0 0 2px">Current</div><div class="a tag" style="left:1189px;top:778px;width:60px;height:17px;line-height:17px;background:#c8701c;text-align:right;padding-right:6px;border-radius:0">15.15%</div>
<div class="a tag" style="left:1133px;top:796px;width:55px;height:18px;line-height:18px;background:#e07d1a;padding-left:6px;border-radius:2px 0 0 2px">Min</div><div class="a tag" style="left:1189px;top:796px;width:60px;height:18px;line-height:18px;background:#e07d1a;text-align:right;padding-right:6px;border-radius:0">0.00%</div>
<div class="a tag" style="left:1383px;top:691px;width:55px;height:18px;line-height:18px;background:#3a80f3;padding-left:6px;border-radius:2px 0 0 2px">Max</div><div class="a tag" style="left:1439px;top:691px;width:64px;height:18px;line-height:18px;background:#3a80f3;text-align:right;padding-right:6px;border-radius:0">1.31 K%</div>
<div class="a tag" style="left:1383px;top:709px;width:55px;height:18px;line-height:18px;background:#1f5de3;padding-left:6px;border-radius:2px 0 0 2px">Current</div><div class="a tag" style="left:1439px;top:709px;width:64px;height:18px;line-height:18px;background:#1f5de3;text-align:right;padding-right:6px;border-radius:0">1.08 K%</div>
<div class="a tag" style="left:1383px;top:780px;width:55px;height:18px;line-height:18px;background:#3179f5;padding-left:6px;border-radius:2px 0 0 2px">Min</div><div class="a tag" style="left:1439px;top:780px;width:64px;height:18px;line-height:18px;background:#3179f5;text-align:right;padding-right:6px;border-radius:0">−12.58%</div>
<div class="a" style="left:240.2px;top:845px;width:8px;height:8px;border-radius:50%;background:#089981"></div><div class="a lg" style="left:256.0px">Total profit</div>
<div class="a" style="left:332.2px;top:845px;width:8px;height:8px;border-radius:50%;background:#0d5c4f"></div><div class="a lg" style="left:347.8px">Open P&amp;L</div>
<div class="a" style="left:424.0px;top:845px;width:8px;height:8px;border-radius:50%;background:#f23645"></div><div class="a lg" style="left:440.0px">Total loss</div>
<div class="a" style="left:510.0px;top:845px;width:8px;height:8px;border-radius:50%;background:#ff9800"></div><div class="a lg" style="left:526.0px">Commission</div>
<div class="a" style="left:613.0px;top:845px;width:8px;height:8px;border-radius:50%;background:#3179f5"></div><div class="a lg" style="left:630.0px">Total P&amp;L</div>
<div class="a" style="left:1228.0px;top:845px;width:8px;height:8px;border-radius:50%;background:#ff9800"></div><div class="a lg" style="left:1245.0px">P&amp;L for buy &amp; hold</div>
<div class="a" style="left:1367.6px;top:845px;width:8px;height:8px;border-radius:50%;background:#3179f5"></div><div class="a lg" style="left:1384.6px">P&amp;L for strategy</div>
<div class="a" style="left:17px;top:874px;width:1781px;height:40px;background:#1e1e1e"></div>
<div class="a" style="left:33px;top:885.7px;font-size:14px;font-weight:bold;line-height:17px;color:#dbdbdb">Returns</div>
<div class="a" style="left:33px;top:926.2px;font-size:14px;line-height:17px;color:#a8a8a8">Metric</div>
<div class="a" style="left:517px;width:200px;text-align:right;top:926.2px;font-size:14px;line-height:17px;color:#a8a8a8">All</div>
<div class="a" style="left:873.5px;width:200px;text-align:right;top:926.2px;font-size:14px;line-height:17px;color:#a8a8a8">Long</div>
<div class="a" style="left:1229.5px;width:200px;text-align:right;top:926.2px;font-size:14px;line-height:17px;color:#a8a8a8">Short</div>
<div class="a" style="left:17px;top:955px;width:1781px;height:1px;background:#3a3a3a"></div>
<div class="a" style="left:33px;top:975.7px;font-size:14px;line-height:17px;color:#dbdbdb">Initial capital</div>
<div class="a" style="left:517px;width:200px;text-align:right;top:974.0px;font-size:14px;line-height:17px;color:#dbdbdb">50.00<span style="font-size:10px;margin-left:3px">USD</span></div>
<div class="a" style="left:17px;top:1012px;width:1781px;height:1px;background:#3a3a3a"></div>
<div class="a" style="left:33px;top:1033.7px;font-size:14px;line-height:17px;color:#dbdbdb">Open P&amp;L</div>
<div class="a" style="left:517px;width:200px;text-align:right;top:1021.7px;font-size:14px;line-height:17px;color:#22ab94">+10.85<span style="font-size:10px;margin-left:3px">USD</span></div>

</body></html>
